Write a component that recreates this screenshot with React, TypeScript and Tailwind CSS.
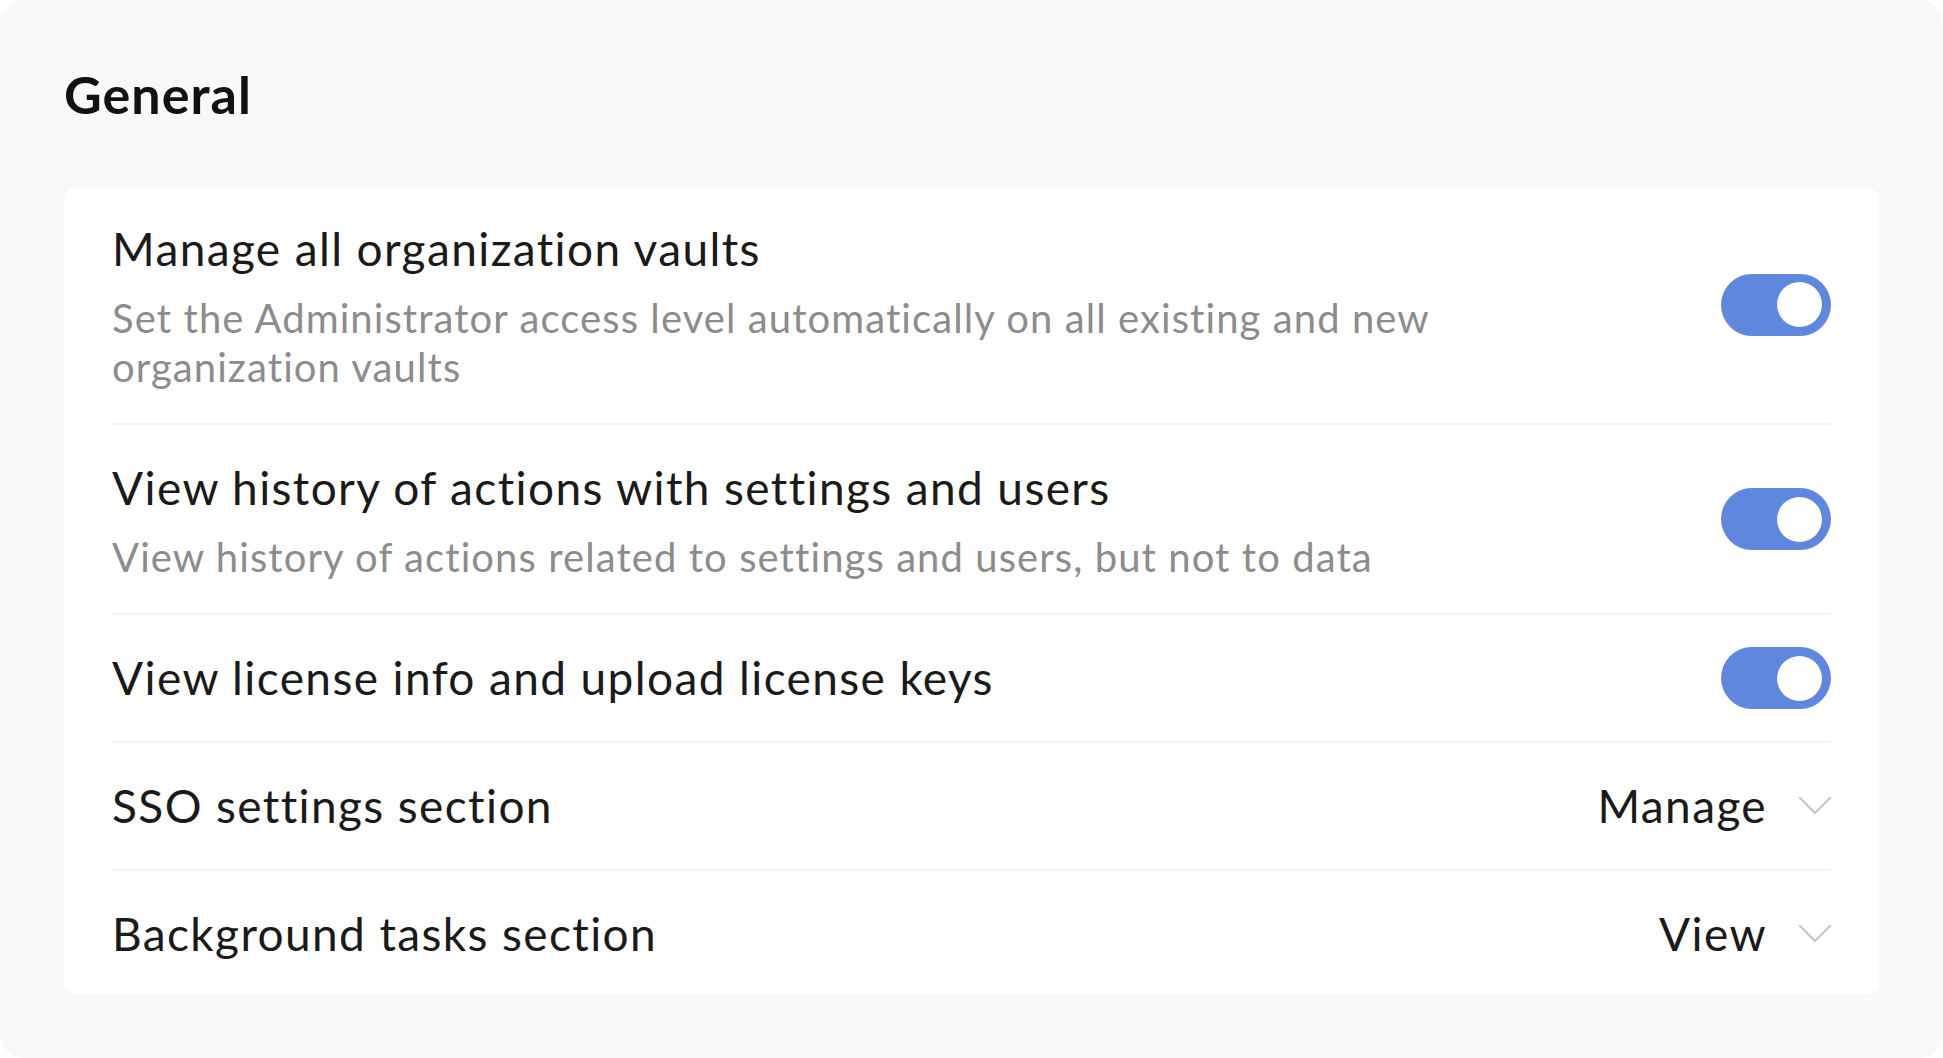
import { useState } from "react";

type Row =
  | { id: string; title: string; description?: string; kind: "toggle" }
  | { id: string; title: string; kind: "select"; value: string };

const ROWS: Row[] = [
  {
    id: "vaults",
    title: "Manage all organization vaults",
    description:
      "Set the Administrator access level automatically on all existing and new organization vaults",
    kind: "toggle",
  },
  {
    id: "history",
    title: "View history of actions with settings and users",
    description: "View history of actions related to settings and users, but not to data",
    kind: "toggle",
  },
  { id: "license", title: "View license info and upload license keys", kind: "toggle" },
  { id: "sso", title: "SSO settings section", kind: "select", value: "Manage" },
  { id: "tasks", title: "Background tasks section", kind: "select", value: "View" },
];

function Toggle({ checked, onChange }: { checked: boolean; onChange: () => void }) {
  return (
    <button
      type="button"
      onClick={onChange}
      className={`w-[110px] h-[62px] shrink-0 rounded-full flex items-center px-[9px] transition-all ${
        checked ? "bg-[#5f87dd] justify-end" : "bg-[#d5d8de] justify-start"
      }`}
    >
      <span className="w-[45px] h-[45px] rounded-full bg-white" />
    </button>
  );
}

function Chevron() {
  return (
    <svg width="32" height="18" viewBox="0 0 32 18" fill="none">
      <polyline points="1,1 16,16 31,1" stroke="#c4c4c4" strokeWidth="2" strokeLinejoin="round" strokeLinecap="round" />
    </svg>
  );
}

export default function App() {
  const [toggles, setToggles] = useState<Record<string, boolean>>({
    vaults: true,
    history: true,
    license: true,
  });

  return (
    <div className="w-[1943px] h-[1058px] bg-white" style={{ fontFamily: "Lato, 'Noto Sans', sans-serif" }}>
      <div className="w-full h-full bg-[#f7f8fa] rounded-[24px] px-[64px] pt-[62px] pb-[64px] flex flex-col">
        {/* Header */}
        <h1 className="text-[52px] leading-[64px] font-bold tracking-[0.02em] text-[#111111] mb-[62px]">General</h1>

        {/* Card */}
        <div className="bg-white rounded-[12px] px-[48px] flex flex-col">
          {ROWS.map((row, i) => {
            const last = i === ROWS.length - 1;
            return (
              <div
                key={row.id}
                className={`flex items-center justify-between gap-8 ${i === 0 ? "pt-[29px]" : "pt-[31px]"} ${
                  last ? "pb-[29px]" : "pb-[31px] border-b-2 border-[#f1f2f4]"
                }`}
              >
                <div className="flex flex-col min-w-0">
                  <div className="text-[46px] leading-[64px] tracking-[0.03em] text-[#1a1a1a]">{row.title}</div>
                  {row.kind === "toggle" && row.description && (
                    <div className="text-[40px] leading-[49px] tracking-[0.027em] text-[#8c8c8c] mt-[13px] max-w-[1380px]">
                      {row.description}
                    </div>
                  )}
                </div>

                {row.kind === "toggle" ? (
                  <Toggle
                    checked={!!toggles[row.id]}
                    onChange={() => setToggles({ ...toggles, [row.id]: !toggles[row.id] })}
                  />
                ) : (
                  <button type="button" className="flex items-center gap-[32px] shrink-0">
                    <span className="text-[46px] leading-[64px] tracking-[0.03em] text-[#1a1a1a]">{row.value}</span>
                    <Chevron />
                  </button>
                )}
              </div>
            );
          })}
        </div>
      </div>
    </div>
  );
}
